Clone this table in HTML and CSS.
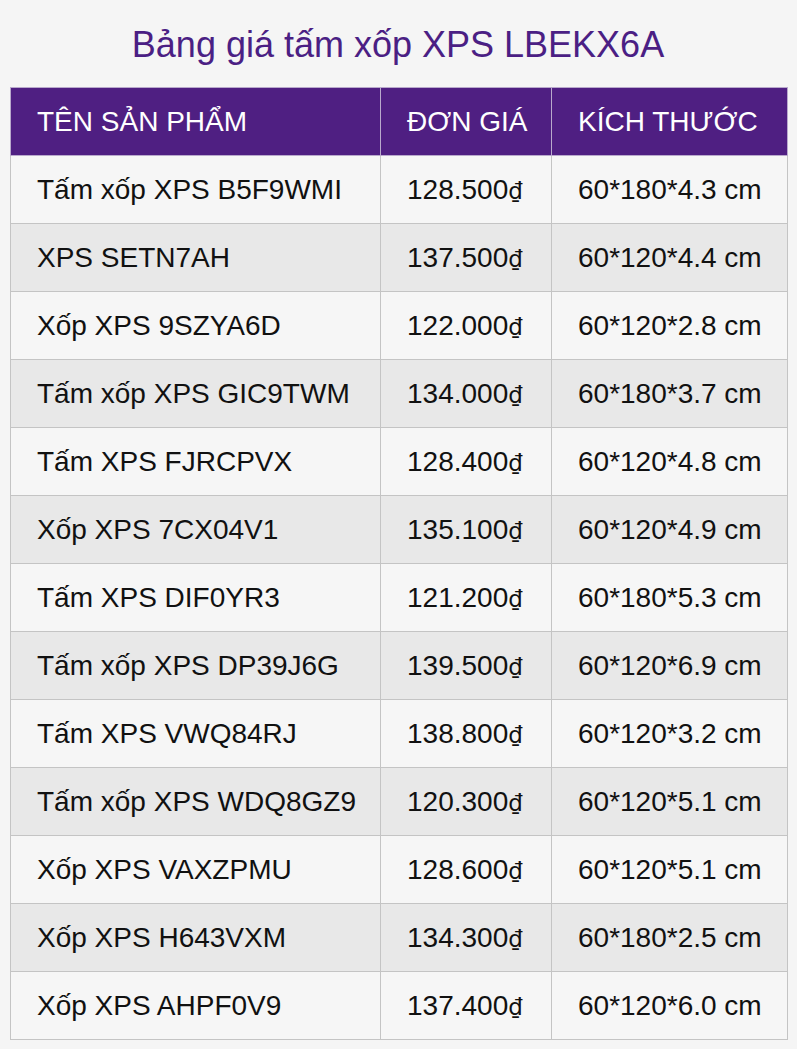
FILE: index.html
```html
<!DOCTYPE html>
<html lang="vi">
<head>
<meta charset="utf-8">
<link rel="stylesheet" href="styles.css">
</head>
<body>
<div class="page">
  <h1 class="title">Bảng giá tấm xốp XPS LBEKX6A</h1>
  <table class="price-table">
    <colgroup>
      <col class="c-name"><col class="c-price"><col class="c-size">
    </colgroup>
    <thead>
      <tr><th>TÊN SẢN PHẨM</th><th>ĐƠN GIÁ</th><th>KÍCH THƯỚC</th></tr>
    </thead>
    <tbody>
      <tr><td>Tấm xốp XPS B5F9WMI</td><td>128.500<span class="cur">₫</span></td><td>60*180*4.3 cm</td></tr>
      <tr><td>XPS SETN7AH</td><td>137.500<span class="cur">₫</span></td><td>60*120*4.4 cm</td></tr>
      <tr><td>Xốp XPS 9SZYA6D</td><td>122.000<span class="cur">₫</span></td><td>60*120*2.8 cm</td></tr>
      <tr><td>Tấm xốp XPS GIC9TWM</td><td>134.000<span class="cur">₫</span></td><td>60*180*3.7 cm</td></tr>
      <tr><td>Tấm XPS FJRCPVX</td><td>128.400<span class="cur">₫</span></td><td>60*120*4.8 cm</td></tr>
      <tr><td>Xốp XPS 7CX04V1</td><td>135.100<span class="cur">₫</span></td><td>60*120*4.9 cm</td></tr>
      <tr><td>Tấm XPS DIF0YR3</td><td>121.200<span class="cur">₫</span></td><td>60*180*5.3 cm</td></tr>
      <tr><td>Tấm xốp XPS DP39J6G</td><td>139.500<span class="cur">₫</span></td><td>60*120*6.9 cm</td></tr>
      <tr><td>Tấm XPS VWQ84RJ</td><td>138.800<span class="cur">₫</span></td><td>60*120*3.2 cm</td></tr>
      <tr><td>Tấm xốp XPS WDQ8GZ9</td><td>120.300<span class="cur">₫</span></td><td>60*120*5.1 cm</td></tr>
      <tr><td>Xốp XPS VAXZPMU</td><td>128.600<span class="cur">₫</span></td><td>60*120*5.1 cm</td></tr>
      <tr><td>Xốp XPS H643VXM</td><td>134.300<span class="cur">₫</span></td><td>60*180*2.5 cm</td></tr>
      <tr><td>Xốp XPS AHPF0V9</td><td>137.400<span class="cur">₫</span></td><td>60*120*6.0 cm</td></tr>
    </tbody>
  </table>
</div>
</body>
</html>
```
FILE: styles.css
```css
html, body {
  margin: 0;
  padding: 0;
  background: #f5f5f5;
}
body {
  font-family: "Liberation Sans", Arial, sans-serif;
  color: #111;
}
.page {
  padding: 0 11px 0 10px;
}
.title {
  margin: 0;
  height: 87px;
  line-height: 90px;
  text-align: center;
  font-size: 36px;
  font-weight: normal;
  color: #4b1f84;
}
.price-table {
  width: 777px;
  border-collapse: collapse;
  table-layout: fixed;
  font-size: 28px;
}
.c-name { width: 370px; }
.c-price { width: 171px; }
.c-size { width: 236px; }
.price-table th,
.price-table td {
  height: 68px;
  padding: 0 0 0 26px;
  text-align: left;
  vertical-align: middle;
  border: 1px solid #c4c4c4;
  white-space: nowrap;
  box-sizing: border-box;
}
.price-table th {
  background: #4f1f82;
  color: #fff;
  font-weight: normal;
  border-color: #b9a9cc;
}
.price-table tbody tr:nth-child(odd) td { background: #f6f6f6; }
.price-table tbody tr:nth-child(even) td { background: #e8e8e8; }
.cur {
  font-family: "DejaVu Sans", sans-serif;
  font-size: 23px;
  letter-spacing: -1px;
}
```
